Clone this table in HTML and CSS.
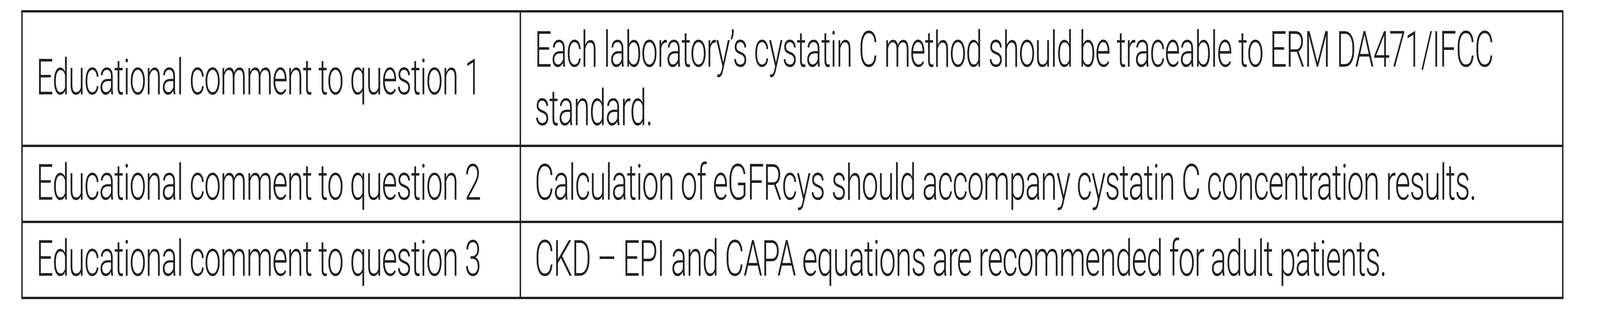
FILE: index.html
```html
<!DOCTYPE html>
<html lang="en">
<head>
<meta charset="utf-8">
<title>Educational comments</title>
<link rel="stylesheet" href="styles.css">
</head>
<body>
<div class="frame">
  <div class="sheet">
    <div class="comments" role="table">
      <div class="cell label row-tall" role="cell"><span>Educational comment to question 1</span></div>
      <div class="cell text row-tall" role="cell"><span>Each laboratory’s cystatin C method should be traceable to ERM DA471/IFCC standard.</span></div>
      <div class="cell label" role="cell"><span>Educational comment to question 2</span></div>
      <div class="cell text" role="cell"><span>Calculation of eGFRcys should accompany cystatin C concentration results.</span></div>
      <div class="cell label" role="cell"><span>Educational comment to question 3</span></div>
      <div class="cell text" role="cell"><span>CKD – EPI and CAPA equations are recommended for adult patients.</span></div>
    </div>
  </div>
</div>
</body>
</html>
```

FILE: styles.css
```css
html, body {
  margin: 0;
  padding: 0;
  background: #ffffff;
  overflow: hidden;
}

.frame {
  width: 100vw;
  height: 800px;
  overflow: hidden;
}

.sheet {
  width: 6829px;
  height: 800px;
  box-sizing: border-box;
  padding: 26px 0 0 91px;
  transform-origin: 0 0;
  font-family: Roboto, "Liberation Sans", Arial, sans-serif;
  font-weight: 300;
  color: #231f20;
}

@media (max-width: 6000px) {
  .sheet {
    transform: scaleX(0.599795);
  }
}

.comments {
  display: grid;
  grid-template-columns: 2127px 4449px;
  grid-template-rows: 345px 195px 195px;
  width: 6582px;
  box-sizing: border-box;
  border-top: 6px solid #231f20;
  border-left: 6px solid #231f20;
}

.cell {
  box-sizing: border-box;
  display: flex;
  align-items: center;
  border-right: 6px solid #231f20;
  border-bottom: 6px solid #231f20;
  padding: 0 40px 8px 58px;
  font-size: 128px;
  line-height: 150px;
  letter-spacing: -2.9px;
}

.cell.text {
  padding-right: 120px;
}

.cell.row-tall.text {
  padding-bottom: 0;
}
```
